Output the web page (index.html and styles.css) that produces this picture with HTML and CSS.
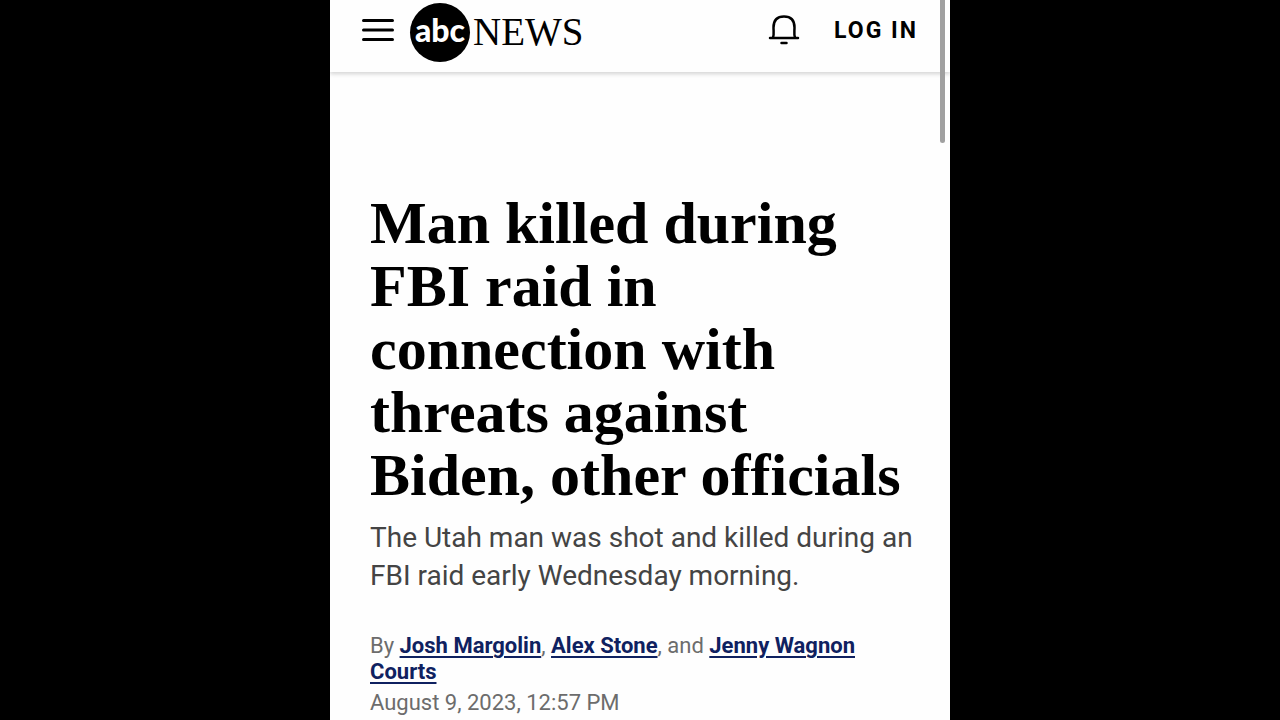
FILE: index.html
```html
<!DOCTYPE html>
<html lang="en">
<head>
<meta charset="utf-8">
<meta name="viewport" content="width=device-width, initial-scale=1">
<title>Man killed during FBI raid - ABC News</title>
<link rel="stylesheet" href="styles.css">
</head>
<body>
<div class="screen">
  <header class="topbar">
    <button class="icon-button" type="button" aria-label="Menu">
      <svg class="menu-icon" width="32" height="24" viewBox="0 0 32 24" fill="none" stroke="#000" stroke-width="3" stroke-linecap="round"><path d="M1.500 2.500h29M1.500 12h29M1.500 21.500h29"/></svg>
    </button>
    <a class="logo" href="#" aria-label="abc NEWS">
      <span class="logo-disc">abc</span>
      <span class="logo-name">NEWS</span>
    </a>
    <button class="icon-button bell" type="button" aria-label="Notifications">
      <svg class="bell-icon" width="32" height="30" viewBox="0 0 32 30" fill="none" stroke="#000" stroke-width="2.500" stroke-linecap="round"><path d="M2 23h28M5 22.500c1.200-3 .5-6 .5-10C5.500 5 9.500 1.500 16 1.500s10.500 3.500 10.500 11c0 4-.7 7 .5 10M13.500 28h5"/></svg>
    </button>
    <button class="login" type="button">LOG IN</button>
  </header>
  <main class="article">
    <h1 class="headline">Man killed during FBI raid in connection with threats against Biden, other officials</h1>
    <p class="summary">The Utah man was shot and killed during an FBI raid early Wednesday morning.</p>
    <p class="byline">By <a href="#">Josh Margolin</a>, <a href="#">Alex Stone</a>, and <a href="#">Jenny Wagnon Courts</a></p>
    <p class="date"><time datetime="2023-08-09T12:57">August 9, 2023, 12:57 PM</time></p>
  </main>
  <div class="scroll-thumb"></div>
</div>
</body>
</html>
```

FILE: styles.css
```css
* {
  box-sizing: border-box;
}

body {
  margin: 0;
  background: #000;
  font-family: Roboto, "Liberation Sans", sans-serif;
}

.screen {
  position: relative;
  max-width: 620px;
  min-height: 100vh;
  margin: 0 auto;
  overflow: hidden;
  background: #fefefe;
}

.topbar {
  display: flex;
  align-items: center;
  height: 72px;
  padding: 0 32px 12px;
  box-shadow: 0 2px 4px #d4d4d4;
}

.icon-button,
.login {
  padding: 0;
  border: 0;
  background: none;
  color: #000;
}

.icon-button {
  display: flex;
}

.logo {
  display: flex;
  align-items: center;
  gap: 3px;
  margin: 4px 0 0 16px;
  color: #000;
  text-decoration: none;
}

.logo-disc {
  display: flex;
  align-items: center;
  justify-content: center;
  width: 60px;
  height: 59px;
  padding-bottom: 5px;
  border-radius: 50%;
  background: #000;
  color: #fff;
  font: 900 32px/1 Lato, sans-serif;
}

.logo-name {
  padding-bottom: 2px;
  font: 39px/1 "Liberation Serif", serif;
}

.bell {
  margin-left: auto;
}

.login {
  margin-left: 34px;
  font: bold 23px/1 Roboto, sans-serif;
  letter-spacing: 2px;
}

.article {
  padding: 120px 32px 16px 40px;
}

.headline {
  margin: 0;
  font: bold 60px/63px "Liberation Serif", serif;
  color: #000;
}

.summary {
  margin: 12px 0 0;
  font-size: 28px;
  line-height: 38px;
  color: #444;
}

.byline {
  margin: 38px 0 0;
  font-size: 22px;
  line-height: 26px;
  color: #6c6c6c;
}

.byline a {
  color: #0f2160;
  font-weight: bold;
  text-decoration-thickness: 2px;
  text-underline-offset: 3px;
}

.date {
  margin: 4px 0 0;
  font-size: 22px;
  line-height: 28px;
  color: #6c6c6c;
}

.scroll-thumb {
  position: absolute;
  top: 0;
  right: 5px;
  width: 5px;
  height: 143px;
  border-radius: 0 0 3px 3px;
  background: #a0a0a0;
}
```
